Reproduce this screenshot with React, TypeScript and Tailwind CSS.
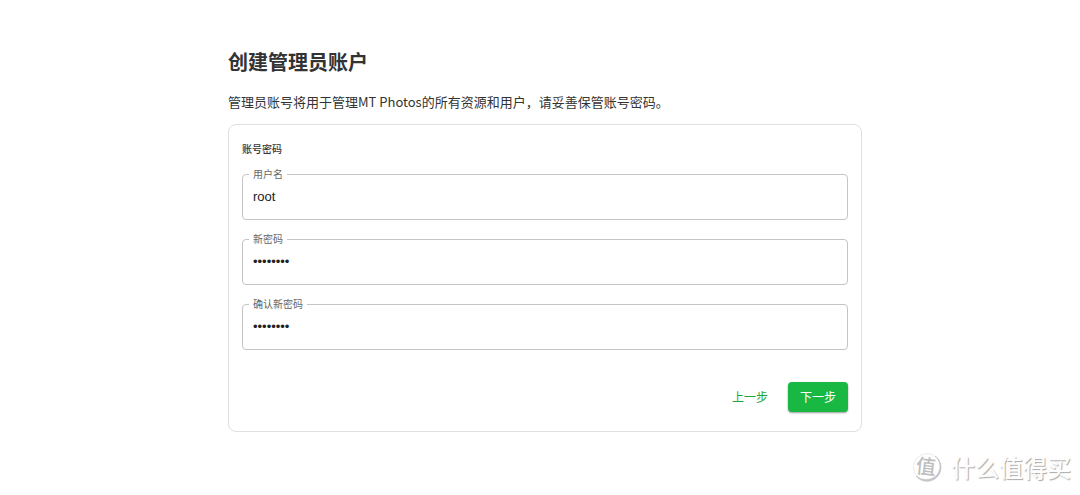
import { useState } from "react";

const cjk = "font-['Noto_Sans_CJK_SC',sans-serif]";

type FieldProps = {
  id: string;
  label: string;
  type: string;
  initial: string;
};

const OutlinedField = ({ id, label, type, initial }: FieldProps) => {
  const [value, setValue] = useState(initial);

  return (
    <fieldset className="min-w-0 rounded border border-[#c4c4c4] pl-1.5">
      <legend className="px-1 text-[10px] leading-[10px] text-[#666]">
        <label htmlFor={id}>{label}</label>
      </legend>
      <input
        id={id}
        type={type}
        value={value}
        onChange={(e) => setValue(e.target.value)}
        className="mb-1.5 block h-[34px] w-full bg-transparent px-1 font-['Liberation_Sans',sans-serif] text-[13px] text-[#222] outline-none"
      />
    </fieldset>
  );
};

const Watermark = () => (
  <div className="pointer-events-none absolute right-[9px] bottom-2.5 flex items-center gap-2 text-[#fdfdfd]">
    <svg viewBox="0 0 32 32" className="h-8 w-8 overflow-visible">
      <circle cx="16" cy="16" r="13.5" fill="none" stroke="#ececec" strokeWidth="1" />
      <path
        d="M24 5A13.8 13.8 0 0 1 26 26A14 14 0 0 1 5 25A15 15 0 0 0 25 25A13.2 13.2 0 0 0 24 5Z"
        fill="#c4c4c4"
        stroke="#c4c4c4"
        strokeWidth="0.8"
      />
      <text
        x="15"
        y="23"
        textAnchor="middle"
        fontSize="20"
        fontWeight="500"
        fill="#bebebe"
        fontFamily="Noto Sans CJK SC"
        transform="rotate(6 16 16)"
      >
        值
      </text>
    </svg>
    <span className="text-[24px] leading-9 font-medium [text-shadow:1px_1px_1px_#aaa]">什么值得买</span>
  </div>
);

export default function App() {
  return (
    <div className={`relative min-h-screen bg-white text-[#333] ${cjk}`}>
      <main className="mx-auto w-full max-w-[644px] pt-12 pl-2.5">
        {/* Heading */}
        <h1 className="text-[20px] leading-7 font-bold">创建管理员账户</h1>
        <p className="mt-4 text-[13px] leading-5">
          管理员账号将用于管理MT Photos的所有资源和用户，请妥善保管账号密码。
        </p>

        {/* Account form */}
        <form
          onSubmit={(e) => e.preventDefault()}
          className="mt-3 rounded-lg border border-[#e0e0e0] px-[13px] pt-4 pb-[19px]"
        >
          <h2 className="text-[10px] leading-4 font-medium">账号密码</h2>
          <div className="mt-3 flex flex-col gap-3.5">
            <OutlinedField id="username" label="用户名" type="text" initial="root" />
            <OutlinedField id="password" label="新密码" type="password" initial="password" />
            <OutlinedField id="confirm" label="确认新密码" type="password" initial="password" />
          </div>

          {/* Actions */}
          <div className="mt-8 flex justify-end gap-2">
            <button type="button" className="h-[30px] rounded px-3 text-[12px] text-[#19a83f]">
              上一步
            </button>
            <button
              type="submit"
              className="h-[30px] rounded bg-[#19b843] px-3 text-[12px] text-white shadow-[0_1px_2px_rgba(0,0,0,0.4)]"
            >
              下一步
            </button>
          </div>
        </form>
      </main>
      <Watermark />
    </div>
  );
}
